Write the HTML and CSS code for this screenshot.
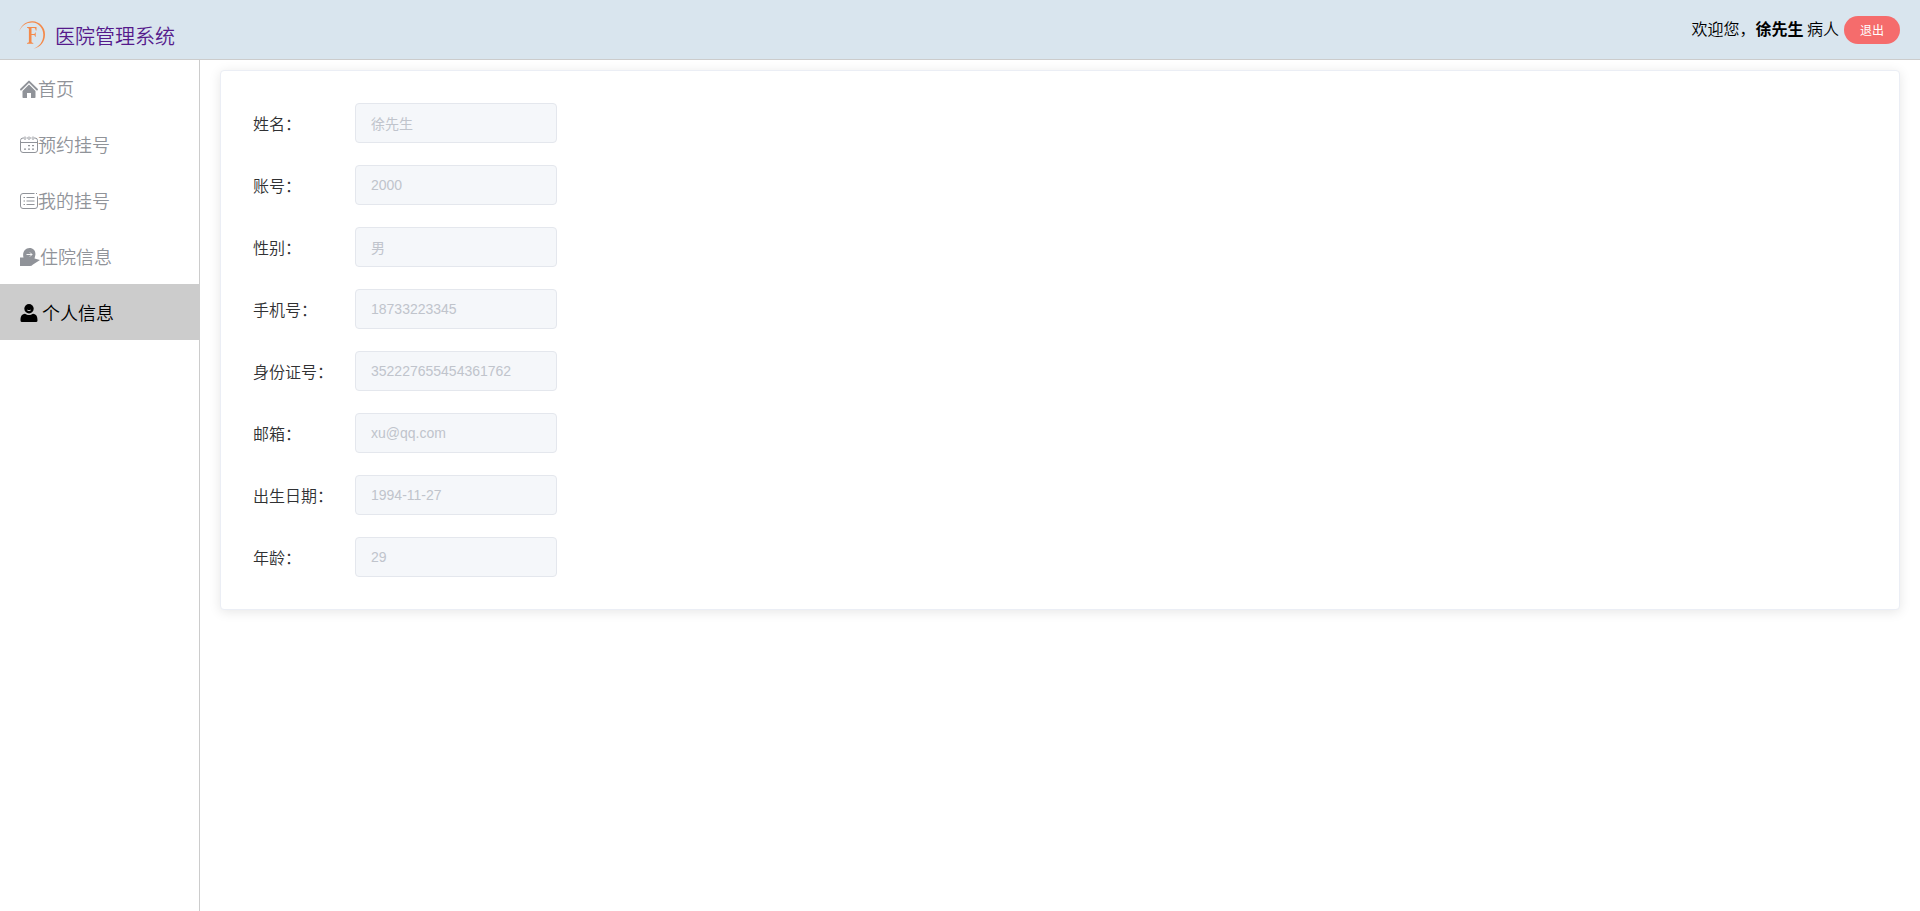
FILE: index.html
```html
<!DOCTYPE html>
<html lang="zh-CN">
<head>
    <meta charset="UTF-8">
    <meta name="viewport" content="width=device-width, initial-scale=1.0">
    <title>医院管理系统</title>
    <link rel="stylesheet" href="styles.css">
</head>
<body>

    <header class="header">
        <a class="brand" href="#">
            <svg class="logo" viewBox="0 0 28 30" aria-hidden="true">
                <path d="M1 11.500C3.500 4.500 9 1 14.500 1.200 21.500 1.500 27 7 27 14.500 27 22 22 27.500 15.500 28.800 21.500 26.500 25.300 21.500 25.300 14.800 25.300 8 20.500 2.600 14.300 2.500 8.500 2.400 4 5.500 1 11.500Z" fill="#f4894a"/>
                <path d="M9 7H18.500V10.500H17.700C17.500 8.600 17 8 15.500 8H13.500V14H15.500C16.600 14 16.900 13.500 17.100 12.500H17.700V16.700H17.100C16.900 15.600 16.600 15.100 15.500 15.100H13.500V21.500C13.500 22.500 14 22.900 15.300 23V23.700H9V23C10.400 22.900 10.900 22.500 10.900 21.500V9.300C10.900 8.300 10.400 7.800 9 7.700Z" fill="#f4894a"/>
            </svg>
            <span>医院管理系统</span>
        </a>
        <div class="user">
            <span>欢迎您，<b>徐先生</b> 病人</span>
            <button type="button" class="logout-btn">退出</button>
        </div>
    </header>

    <div class="container">
        <nav class="sidebar">
            <a class="menu-item" href="#">
                <svg class="icon" viewBox="0 0 18 18" aria-hidden="true">
                    <path d="M1 9.500 9 1.600l8 7.900" fill="none" stroke="currentColor" stroke-width="1.900" stroke-linecap="round" stroke-linejoin="round"/>
                    <path d="M9 4.500 15.500 11v6.200a.8.8 0 0 1-.8.8H11v-5H7v5H3.300a.8.8 0 0 1-.8-.8V11z" fill="currentColor"/>
                </svg>
                <span>首页</span>
            </a>
            <a class="menu-item" href="#">
                <svg class="icon" viewBox="0 0 18 18" aria-hidden="true">
                    <path d="M4 2H3Q.5 2 .5 4.500v9.500Q.5 16.500 3 16.500h12q2.500 0 2.500-2.500V4.500Q17.500 2 15 2h-1M6.500 2h1.500M10 2h1.500M.5 6.500h17M5 .5V4M9 .5V4M13 .5V4" fill="none" stroke="currentColor"/>
                    <path d="M8 9h2v1.300H8zM12 9h2v1.300h-2zM4 12.500h2v1.300H4zM8 12.500h2v1.300H8zM12 12.500h2v1.300h-2z" fill="currentColor"/>
                </svg>
                <span>预约挂号</span>
            </a>
            <a class="menu-item" href="#">
                <svg class="icon" viewBox="0 0 18 18" aria-hidden="true">
                    <path d="M14.500 1.500H3Q.5 1.500 .5 4v10Q.5 16.500 3 16.500h12q2.500 0 2.500-2.500V4.500M16 1.500h1" fill="none" stroke="currentColor"/>
                    <path d="M3.500 5.500h1.500M6.500 5.500h8M3.500 9h1.500M6.500 9h8M3.500 12.500h1.500M6.500 12.500h8" fill="none" stroke="currentColor" stroke-width="1.200"/>
                </svg>
                <span>我的挂号</span>
            </a>
            <a class="menu-item" href="#">
                <svg class="icon icon-wide" viewBox="0 0 20 18" aria-hidden="true">
                    <path d="M0 9.500h3.500C2 4.500 5 0 9.500 0 14 0 16.500 4 15 8.500L14.500 10.500l5.500 1.500-7 4.500q-1.500 1.500-3 1.500H0z" fill="currentColor"/>
                    <path d="M6.500 6.500h5.500M10 4.500l2 2-2 2" fill="none" stroke="#fff" stroke-width=".9"/>
                </svg>
                <span>住院信息</span>
            </a>
            <a class="menu-item active" href="#" aria-current="page">
                <svg class="icon" viewBox="0 0 18 18" aria-hidden="true">
                    <circle cx="9" cy="4.700" r="4.700" fill="currentColor"/>
                    <path d="M.5 16.500c0-4 1-6.500 4.500-6.800 1.500.9 2.500 1.200 4 1.200s2.500-.3 4-1.200c3.500.3 4.500 2.800 4.500 6.800q0 1.500-1.500 1.500H2Q.5 18 .5 16.500z" fill="currentColor"/>
                    <path d="M7 5.500Q9 6.500 11 5.500 10.800 7.100 9 7.100T7 5.500z" fill="#ccc"/>
                </svg>
                <span>&nbsp;个人信息</span>
            </a>
        </nav>

        <main class="main">
            <form class="card">
                <div class="form-row">
                    <label for="name">姓名：</label>
                    <input id="name" type="text" value="徐先生" disabled>
                </div>
                <div class="form-row">
                    <label for="account">账号：</label>
                    <input id="account" type="text" value="2000" disabled>
                </div>
                <div class="form-row">
                    <label for="gender">性别：</label>
                    <input id="gender" type="text" value="男" disabled>
                </div>
                <div class="form-row">
                    <label for="phone">手机号：</label>
                    <input id="phone" type="text" value="18733223345" disabled>
                </div>
                <div class="form-row">
                    <label for="card">身份证号：</label>
                    <input id="card" type="text" value="352227655454361762" disabled>
                </div>
                <div class="form-row">
                    <label for="email">邮箱：</label>
                    <input id="email" type="text" value="xu@qq.com" disabled>
                </div>
                <div class="form-row">
                    <label for="birthday">出生日期：</label>
                    <input id="birthday" type="text" value="1994-11-27" disabled>
                </div>
                <div class="form-row">
                    <label for="age">年龄：</label>
                    <input id="age" type="text" value="29" disabled>
                </div>
            </form>
        </main>
    </div>

</body>
</html>
```
FILE: styles.css
```css
* {
    box-sizing: border-box;
}

body {
    margin: 0;
    min-height: 100vh;
    display: flex;
    flex-direction: column;
    font-family: "Noto Sans CJK SC", sans-serif;
    font-weight: 350;
    font-size: 16px;
    color: #000;
    background-color: #fff;
}

.header {
    display: flex;
    justify-content: space-between;
    align-items: flex-start;
    height: 60px;
    padding: 16px 20px 0 18px;
    background-color: #d9e5ee;
    border-bottom: 1px solid #ccc;
}

.brand {
    display: flex;
    align-items: flex-start;
    gap: 9px;
    padding-top: 4px;
    font-size: 20px;
    line-height: 32px;
    color: #551a8b;
    text-decoration: none;
}

.logo {
    width: 28px;
    height: 30px;
}

.user {
    display: flex;
    align-items: flex-start;
    gap: 5px;
    line-height: 24px;
}

.user b {
    font-weight: bold;
}

.logout-btn {
    height: 28px;
    padding: 0 16px;
    border: none;
    border-radius: 20px;
    font-family: inherit;
    font-size: 12px;
    font-weight: 400;
    line-height: 28px;
    color: #fff;
    background-color: #f56c6c;
    cursor: pointer;
}

.container {
    display: flex;
    flex: 1;
}

.sidebar {
    width: 200px;
    border-right: 1px solid #ccc;
}

.menu-item {
    display: flex;
    align-items: center;
    height: 56px;
    padding: 2px 20px 0;
    font-size: 18px;
    color: #909399;
    text-decoration: none;
}

.menu-item span {
    padding-bottom: 2px;
}

.menu-item.active {
    color: #000;
    background-color: #ccc;
}

.icon {
    width: 18px;
    height: 18px;
}

.icon-wide {
    width: 20px;
}

.main {
    flex: 1;
    padding: 10px 20px;
}

.card {
    display: flex;
    flex-direction: column;
    gap: 22px;
    padding: 32px;
    border: 1px solid #ebeef5;
    border-radius: 4px;
    background-color: #fff;
    box-shadow: 0 2px 12px 0 rgba(0, 0, 0, 0.1);
}

.form-row {
    display: flex;
    align-items: center;
}

.form-row label {
    width: 102px;
    color: #303133;
}

.form-row input {
    width: 202px;
    height: 40px;
    padding: 0 15px;
    border: 1px solid #e4e7ed;
    border-radius: 4px;
    font-family: "Liberation Sans", "Noto Sans CJK SC", sans-serif;
    font-size: 14px;
    color: #c0c4cc;
    background-color: #f5f7fa;
    cursor: not-allowed;
}
```
